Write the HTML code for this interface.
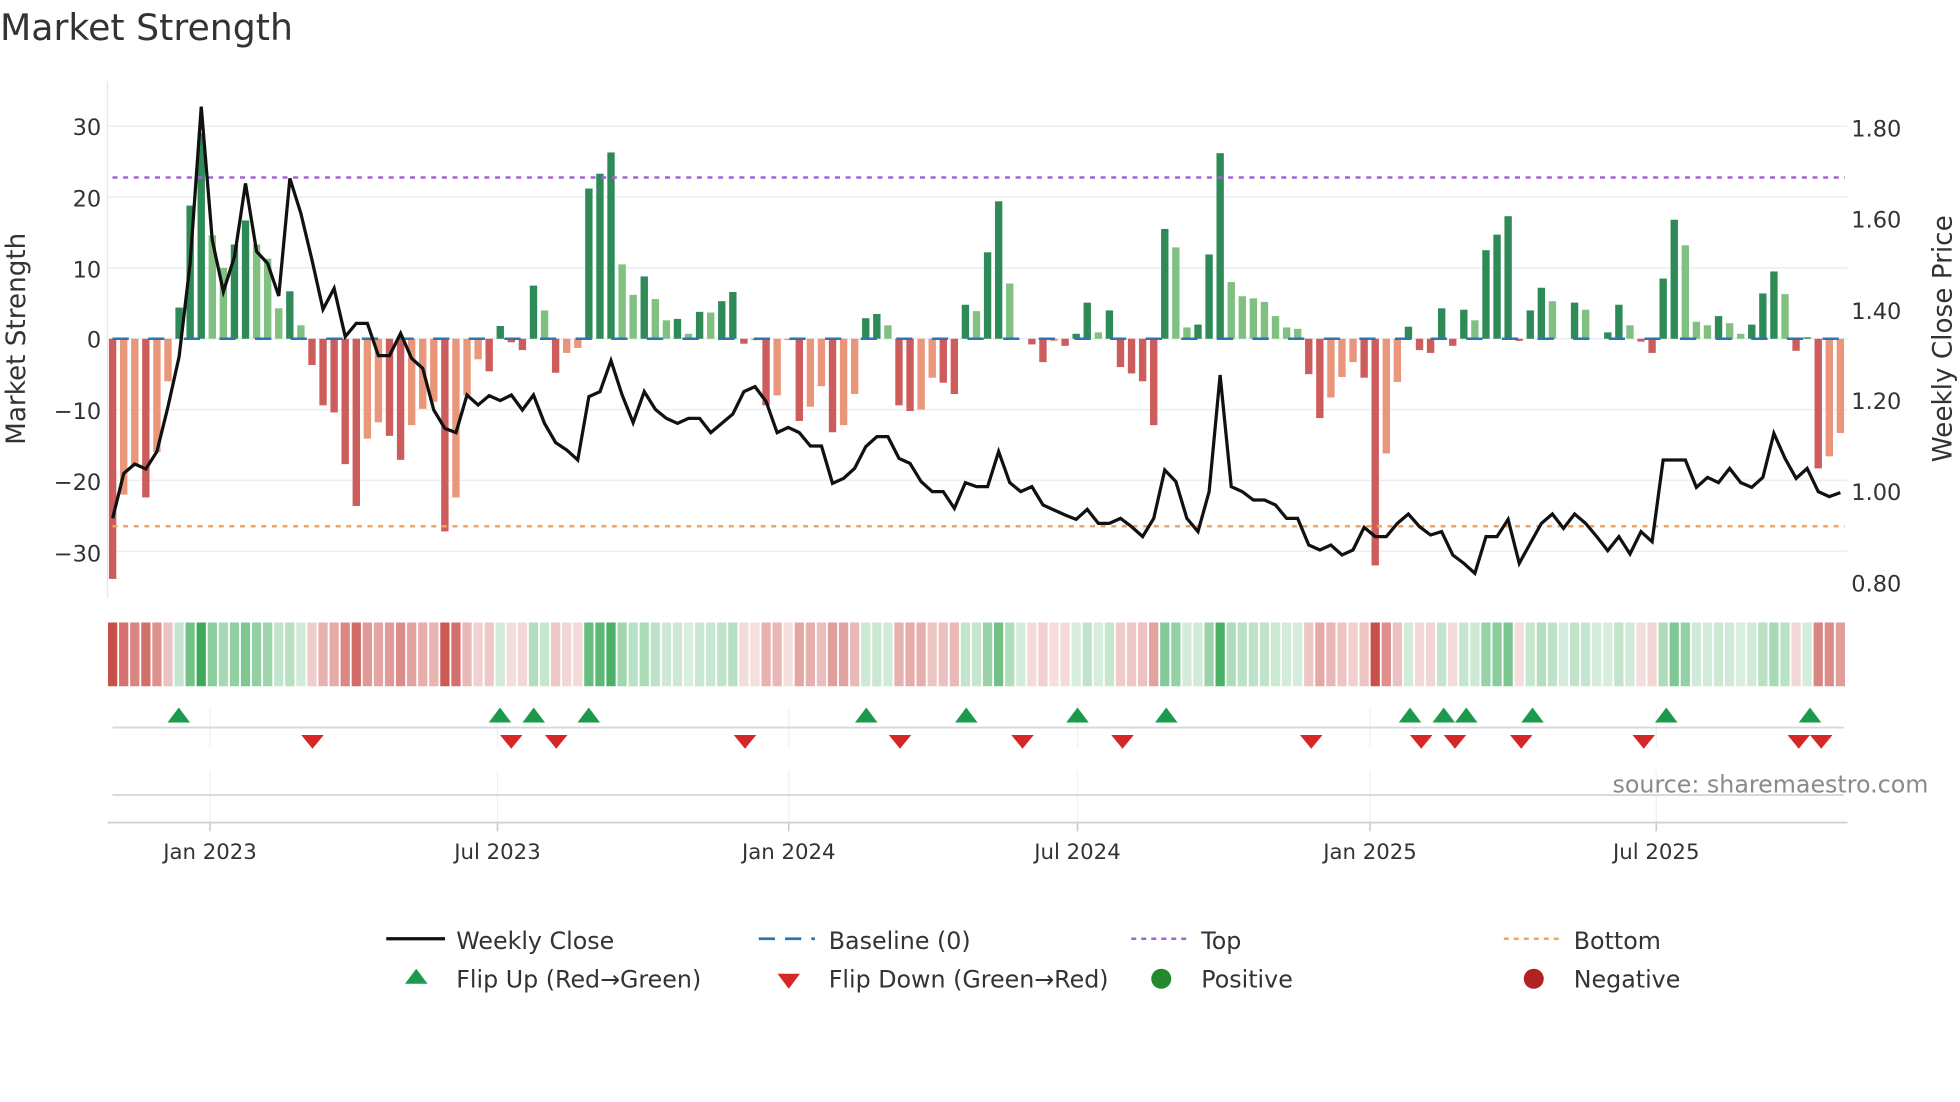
<!DOCTYPE html>
<html><head><meta charset="utf-8"><style>
html,body{margin:0;padding:0;background:#fff;}
svg{display:block;font-family:"DejaVu Sans","Liberation Sans",sans-serif;}
</style></head><body>
<svg id="s" width="1960" height="1102" viewBox="0 0 1568 881.6" xmlns="http://www.w3.org/2000/svg">
<rect width="1568" height="882" fill="#fff"/>
<text x="0" y="32" font-size="29" fill="#333">Market Strength</text>
<g id="grid" stroke="#ebedf0" stroke-width="1.2"></g>
<line x1="86" y1="65" x2="86" y2="478" stroke="#e6e6e6" stroke-width="1"/>
<g id="bars"></g>
<line x1="90" y1="142" x2="1476" y2="142" stroke="#a463d8" stroke-width="2" stroke-dasharray="4,4.5"/>
<line x1="90" y1="421" x2="1476" y2="421" stroke="#f2a45e" stroke-width="2" stroke-dasharray="4,4.5"/>
<line x1="90" y1="271" x2="1476" y2="271" stroke="#2b75b0" stroke-width="2" stroke-dasharray="13,15.5"/>
<polyline id="price" fill="none" stroke="#111" stroke-width="2.6" stroke-linejoin="miter"/>
<g font-size="18" fill="#333" text-anchor="end">
<text x="81" y="108">30</text><text x="81" y="165">20</text><text x="81" y="222">10</text><text x="81" y="278">0</text>
<text x="81" y="335">−10</text><text x="81" y="392">−20</text><text x="81" y="449">−30</text>
</g>
<g font-size="18" fill="#333">
<text x="1481" y="109">1.80</text><text x="1481" y="182">1.60</text><text x="1481" y="255">1.40</text>
<text x="1481" y="327">1.20</text><text x="1481" y="400">1.00</text><text x="1481" y="473">0.80</text>
</g>
<text transform="translate(20,271) rotate(-90)" font-size="21" fill="#333" text-anchor="middle">Market Strength</text>
<text transform="translate(1561,271) rotate(-90)" font-size="21" fill="#333" text-anchor="middle">Weekly Close Price</text>
<g id="strip"></g>
<g id="vgrid" stroke="#eef0f3" stroke-width="1"></g>
<line x1="90" y1="582" x2="1475" y2="582" stroke="#d5d8dc" stroke-width="1.5"/>
<line x1="90" y1="636" x2="1475" y2="636" stroke="#d5d8dc" stroke-width="1.5"/>
<line x1="86" y1="658" x2="1478" y2="658" stroke="#d0d3d6" stroke-width="1.5"/>
<g id="marks"></g>
<g font-size="17" fill="#333" text-anchor="middle">
<text x="168" y="687">Jan 2023</text><text x="398" y="687">Jul 2023</text><text x="631" y="687">Jan 2024</text>
<text x="862" y="687">Jul 2024</text><text x="1096" y="687">Jan 2025</text><text x="1325" y="687">Jul 2025</text>
</g>
<text x="1290" y="634" font-size="19" fill="#8a8a8a">source: sharemaestro.com</text>
<g font-size="19" fill="#333">
<line x1="309" y1="751" x2="356" y2="751" stroke="#111" stroke-width="2.6"/>
<text x="365" y="759">Weekly Close</text>
<line x1="607" y1="751" x2="652" y2="751" stroke="#2b75b0" stroke-width="2.2" stroke-dasharray="13,8"/>
<text x="663" y="759">Baseline (0)</text>
<line x1="905" y1="751" x2="950" y2="751" stroke="#a463d8" stroke-width="2" stroke-dasharray="4,4"/>
<text x="961" y="759">Top</text>
<line x1="1203" y1="751" x2="1248" y2="751" stroke="#f2a45e" stroke-width="2" stroke-dasharray="4,4"/>
<text x="1259" y="759">Bottom</text>
<polygon points="324,787 342,787 333,775" fill="#1a9a4a"/>
<text x="365" y="790">Flip Up (Red→Green)</text>
<polygon points="622,779 640,779 631,791" fill="#d62728"/>
<text x="663" y="790">Flip Down (Green→Red)</text>
<circle cx="929" cy="783" r="8" fill="#23892e"/>
<text x="961" y="790">Positive</text>
<circle cx="1227" cy="783" r="8" fill="#b22222"/>
<text x="1259" y="790">Negative</text>
</g>
</svg>
<script>
var NS="http://www.w3.org/2000/svg";
function el(p,t,a){var e=document.createElementNS(NS,t);for(var k in a)e.setAttribute(k,a[k]);p.appendChild(e);return e;}
var B=[[-33.9,1],[-22,0],[-18,0],[-22.4,1],[-16,0],[-6,0],[4.4,1],[18.8,1],[29,1],[14.6,0],[10,0],[13.3,1],[16.7,1],[13.3,0],[11.3,0],[4.3,0],[6.7,1],[1.9,0],[-3.7,1],[-9.4,1],[-10.4,1],[-17.7,1],[-23.6,1],[-14.1,0],[-11.8,0],[-13.7,1],[-17.1,1],[-12.2,0],[-9.9,0],[-8.9,0],[-27.2,1],[-22.4,0],[-8,0],[-2.9,0],[-4.6,1],[1.8,1],[-0.5,1],[-1.6,1],[7.5,1],[4,0],[-4.8,1],
[-2,0],[-1.3,0],[21.2,1],[23.3,1],[26.3,1],[10.5,0],[6.2,0],[8.8,1],[5.6,0],[2.6,0],[2.8,1],[0.7,0],[3.8,1],[3.7,0],[5.3,1],[6.6,1],[-0.7,1],[-0.2,0],[-9.4,1],[-8,0],[-0.2,0],[-11.6,1],[-9.6,0],[-6.7,0],[-13.2,1],[-12.2,0],[-7.8,0],[2.9,1],[3.5,1],[1.9,0],[-9.4,1],[-10.2,1],[-10,0],[-5.5,0],[-6.2,1],[-7.8,1],[4.8,1],[3.9,0],[12.2,1],[19.4,1],
[7.8,0],[0,0],[-0.8,1],[-3.3,1],[-0.3,0],[-1,1],[0.7,1],[5.1,1],[0.9,0],[4,1],[-4,1],[-4.9,1],[-6,1],[-12.2,1],[15.5,1],[12.9,0],[1.6,0],[2,1],[11.9,1],[26.2,1],[8,0],[6,0],[5.7,0],[5.2,0],[3.2,0],[1.6,0],[1.4,0],[-5,1],[-11.2,1],[-8.3,0],[-5.4,0],[-3.3,0],[-5.5,1],[-32,1],[-16.2,0],[-6.1,0],[1.7,1],[-1.6,1],[-2,1],
[4.3,1],[-1,1],[4.1,1],[2.6,0],[12.5,1],[14.7,1],[17.3,1],[-0.3,1],[4,1],[7.2,1],[5.3,0],[0,0],[5.1,1],[4.1,0],[0,0],[0.9,1],[4.8,1],[1.9,0],[-0.4,1],[-2,1],[8.5,1],[16.8,1],[13.2,0],[2.4,0],[1.9,0],[3.2,1],[2.2,0],[0.7,0],[2,1],[6.4,1],[9.5,1],[6.3,0],[-1.7,1],[0.2,1],[-18.3,1],[-16.6,0],[-13.3,0]];
var P=[1285,1150,1122,1137,1085,950,800,520,50,450,605,500,280,485,520,618,265,370,510,658,595,740,700,700,797,797,730,805,835,960,1015,1028,915,945,917,932,915,960,915,1000,1058,
1080,1110,920,905,812,915,998,905,958,985,1000,985,985,1028,1000,972,905,890,935,1028,1012,1028,1068,1068,1180,1165,1135,1070,1040,1040,1105,1120,1175,1205,1205,1255,1178,1190,1190,1085,
1178,1205,1190,1245,1260,1275,1288,1258,1300,1300,1285,1310,1340,1285,1140,1175,1285,1325,1205,855,1190,1205,1230,1230,1245,1285,1285,1365,1380,1365,1395,1380,1312,1340,1340,1300,1272,1310,1335,
1325,1395,1420,1450,1340,1340,1288,1420,1360,1300,1272,1315,1272,1300,1340,1382,1340,1392,1325,1355,1110,1110,1110,1192,1162,1178,1135,1178,1192,1162,1030,1105,1165,1135,1205,1220,1208];
var x0=90.1,dx=(1472.3-90.1)/(B.length-1);
var g=document.getElementById('grid');
[30,20,10,0,-10,-20,-30].forEach(function(v){var y=271-v*5.667;el(g,'line',{x1:86,x2:1478,y1:y,y2:y});});
var bars=document.getElementById('bars'),strip=document.getElementById('strip');
B.forEach(function(b,i){var v=b[0],x=x0+i*dx,h=Math.abs(v)*5.667;
 var c=v>=0?(b[1]?'#2e8b57':'#80c080'):(b[1]?'#cd5c5c':'#e9967a');
 if(h>0.3)el(bars,'rect',{x:x-2.95,y:v>=0?271-h:271,width:5.9,height:h,fill:c});
 var a=Math.min(1,0.18+Math.abs(v)/30*0.85);
 var sc=v>=0?'rgba(60,170,90,'+a+')':'rgba(200,80,75,'+a+')';
 if(v>=0&&Math.abs(v)<0.5)sc='rgba(60,170,90,0.22)';
 el(strip,'rect',{x:x-3.7,y:498,width:7.4,height:51,fill:sc});
});
document.getElementById('price').setAttribute('points',P.map(function(z,i){return (x0+i*dx).toFixed(1)+','+(72+z/3.75).toFixed(1);}).join(' '));
var vg=document.getElementById('vgrid');
[168,398,631,862,1096,1325].forEach(function(x){el(vg,'line',{x1:x,x2:x,y1:566,y2:598});el(vg,'line',{x1:x,x2:x,y1:616,y2:658});
 el(vg,'line',{x1:x,x2:x,y1:658,y2:665,stroke:'#c8cbce','stroke-width':1.3});});
var m=document.getElementById('marks');
[143,400,427,471,693,773,862,933,1128,1155,1173,1226,1333,1448].forEach(function(x){el(m,'polygon',{points:(x-9)+',578 '+(x+9)+',578 '+x+',566',fill:'#1a9a4a'});});
[250,409,445,596,720,818,898,1049,1137,1164,1217,1315,1439,1457].forEach(function(x){el(m,'polygon',{points:(x-9)+',588 '+(x+9)+',588 '+x+',599',fill:'#d62728'});});
</script>
</body></html>
